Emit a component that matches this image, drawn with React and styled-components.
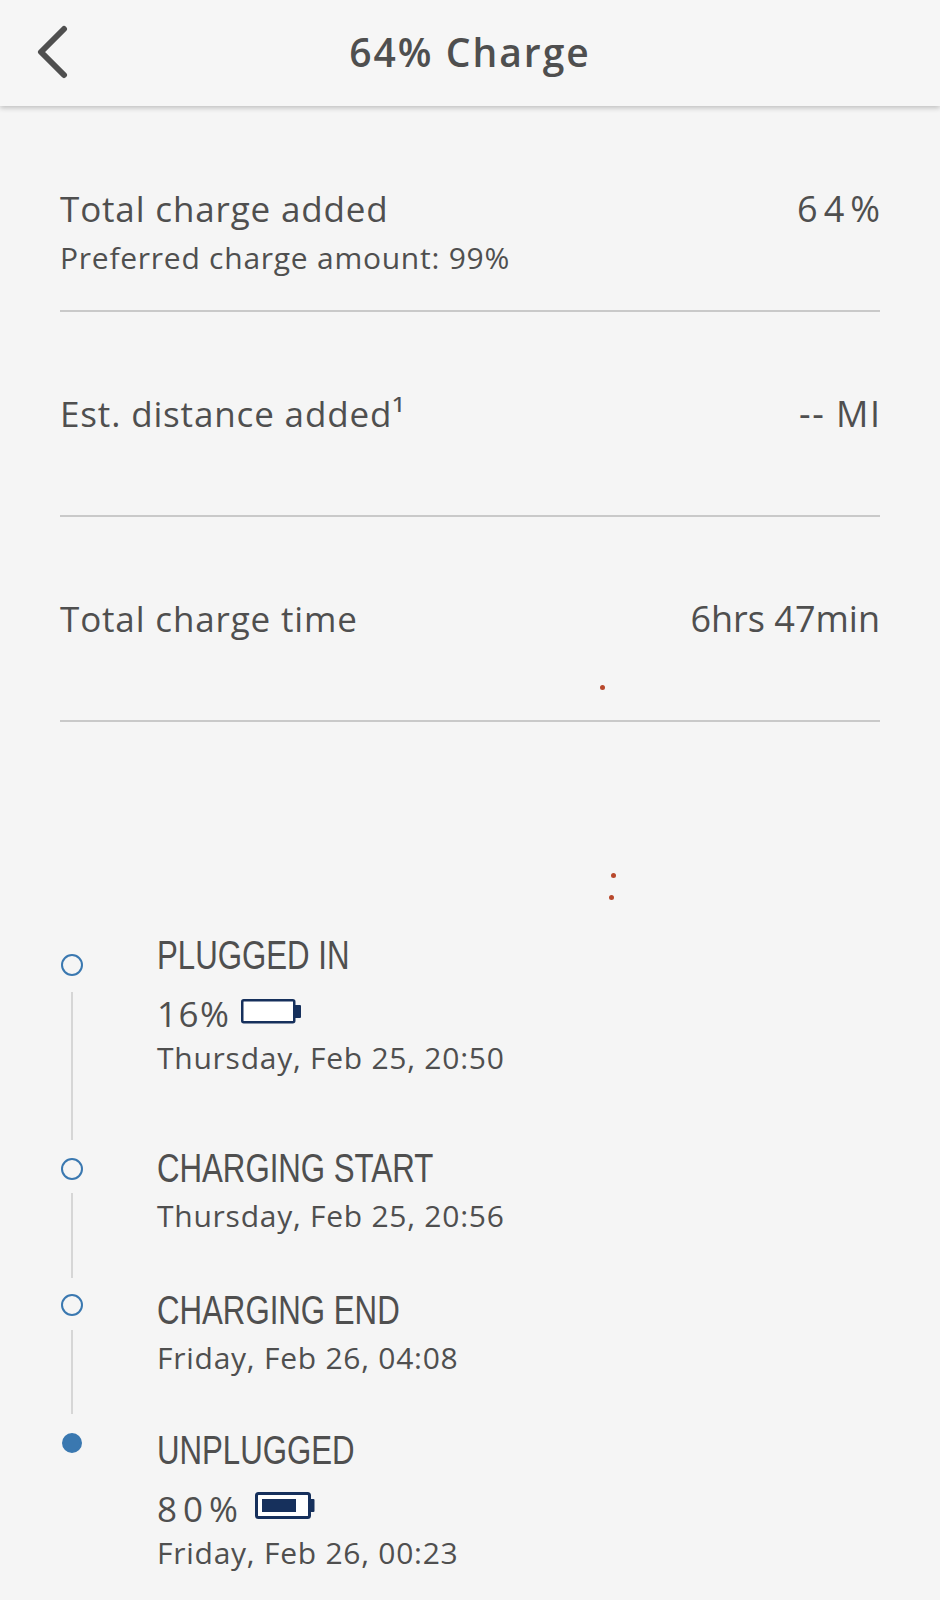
import styled, { createGlobalStyle } from "styled-components";

const ink = "#4f4f4f";
const navy = "#16305c";
const blue = "#3a78b0";

const GlobalStyle = createGlobalStyle`
  html, body {
    margin: 0;
    background: #f5f5f5;
  }
  * {
    box-sizing: border-box;
  }
`;

const summary = [
  { label: "Total charge added", note: "Preferred charge amount: 99%", value: "64%", spacing: 6 },
  { label: "Est. distance added¹", value: "-- MI", spacing: 1.5 },
  { label: "Total charge time", value: "6hrs 47min", spacing: 0 },
];

const steps = [
  {
    title: "PLUGGED IN",
    percent: "16%",
    spacing: 1.5,
    level: 0,
    date: "Thursday, Feb 25, 20:50",
    height: 213,
    dotTop: 19,
    lineTop: 16,
    lineEnd: 8,
  },
  {
    title: "CHARGING START",
    date: "Thursday, Feb 25, 20:56",
    height: 142,
    dotTop: 10,
    lineTop: 13,
    lineEnd: 12,
  },
  {
    title: "CHARGING END",
    date: "Friday, Feb 26, 04:08",
    height: 140,
    dotTop: 4,
    lineTop: 14,
    lineEnd: 16,
  },
  {
    title: "UNPLUGGED",
    percent: "80%",
    spacing: 6,
    level: 0.8,
    date: "Friday, Feb 26, 00:23",
    height: 170,
    dotTop: 3,
    filled: true,
  },
];

function BackIcon() {
  return (
    <svg width="34" height="54" viewBox="0 0 34 54" fill="none">
      <path d="M28 4 L5 27 L28 50" stroke={ink} strokeWidth="6" strokeLinecap="round" strokeLinejoin="round" />
    </svg>
  );
}

function Battery({ level }) {
  if (level > 0) {
    return (
      <svg width="60" height="28" viewBox="0 0 60 28">
        <rect x="1.5" y="1.5" width="53" height="24" rx="2" fill="#fff" stroke={navy} strokeWidth="3" />
        <rect x="7" y="7" width="34" height="13" fill={navy} />
        <rect x="55" y="7" width="4.5" height="13" rx="1" fill={navy} />
      </svg>
    );
  }
  return (
    <svg width="60" height="25" viewBox="0 0 60 25">
      <rect x="1.25" y="1.25" width="52" height="22" rx="1.5" fill="#fff" stroke={navy} strokeWidth="2.5" />
      <rect x="53" y="6" width="7" height="13" rx="1" fill={navy} />
    </svg>
  );
}

export default function App() {
  return (
    <Page>
      <GlobalStyle />
      <Header>
        <BackButton type="button">
          <BackIcon />
        </BackButton>
        <Title>64% Charge</Title>
      </Header>

      <Summary>
        {summary.map((row) => (
          <SummaryRow key={row.label}>
            <div>
              <Label>{row.label}</Label>
              {row.note && <Note>{row.note}</Note>}
            </div>
            <Value $spacing={row.spacing}>{row.value}</Value>
          </SummaryRow>
        ))}
      </Summary>

      <Timeline>
        {steps.map((step) => (
          <Step key={step.title} $height={step.height}>
            <Marker $top={step.dotTop}>
              <Dot $filled={step.filled} />
              {step.lineEnd && <Connector $top={step.lineTop} $end={step.lineEnd} />}
            </Marker>
            <div>
              <StepTitle>{step.title}</StepTitle>
              {step.percent && (
                <Level>
                  <Percent $spacing={step.spacing}>{step.percent}</Percent>
                  <BatterySlot>
                    <Battery level={step.level} />
                  </BatterySlot>
                </Level>
              )}
              <StepDate $tight={Boolean(step.percent)}>{step.date}</StepDate>
            </div>
          </Step>
        ))}
      </Timeline>

      <Speck $x={600} $y={685} />
      <Speck $x={611} $y={873} />
      <Speck $x={609} $y={895} />
    </Page>
  );
}

const Page = styled.main`
  position: relative;
  width: 940px;
  height: 1600px;
  overflow: hidden;
  background: #f5f5f5;
  color: ${ink};
  font-family: "Open Sans", "Noto Sans", sans-serif;
`;

const Header = styled.header`
  position: relative;
  display: flex;
  align-items: center;
  justify-content: center;
  height: 106px;
  padding-bottom: 4px;
  background: #f6f6f6;
  box-shadow: 0 2px 5px rgba(0, 0, 0, 0.22);
`;

const BackButton = styled.button`
  position: absolute;
  left: 36px;
  top: 25px;
  display: flex;
  padding: 0;
  border: 0;
  background: none;
`;

const Title = styled.h1`
  margin: 0;
  font-size: 39px;
  font-weight: 600;
  letter-spacing: 2px;
  color: ${ink};
`;

const Summary = styled.section`
  padding: 1px 60px 0;
`;

const SummaryRow = styled.div`
  display: flex;
  align-items: flex-start;
  justify-content: space-between;
  height: 205px;
  padding-top: 80px;
  border-bottom: 2px solid #c9c9c9;
`;

const Label = styled.div`
  font-size: 35px;
  line-height: 44px;
  letter-spacing: 0.85px;
`;

const Value = styled.div`
  margin-right: ${(p) => -p.$spacing}px;
  font-size: 36px;
  line-height: 44px;
  letter-spacing: ${(p) => p.$spacing}px;
`;

const Note = styled.div`
  margin-top: 9px;
  font-size: 30px;
  line-height: 36px;
  letter-spacing: 0.75px;
`;

const Timeline = styled.section`
  margin-top: 213px;
`;

const Step = styled.article`
  display: grid;
  grid-template-columns: 157px 1fr;
  height: ${(p) => p.$height}px;
`;

const Marker = styled.div`
  display: flex;
  flex-direction: column;
  align-items: center;
  width: 22px;
  margin-left: 61px;
  padding-top: ${(p) => p.$top}px;
`;

const Dot = styled.span`
  flex: none;
  width: ${(p) => (p.$filled ? 20 : 22)}px;
  height: ${(p) => (p.$filled ? 20 : 22)}px;
  border-radius: 50%;
  border: 2px solid ${blue};
  background: ${(p) => (p.$filled ? blue : "transparent")};
`;

const Connector = styled.span`
  flex: 1;
  width: 2px;
  margin: ${(p) => p.$top}px 0 ${(p) => p.$end}px;
  background: #d6d6d6;
`;

const StepTitle = styled.h2`
  margin: 0;
  font-family: "Liberation Sans", sans-serif;
  font-size: 40px;
  line-height: 40px;
  font-weight: 400;
  color: ${ink};
  transform: scaleX(0.78);
  transform-origin: left center;
  white-space: nowrap;
`;

const Level = styled.div`
  display: flex;
  align-items: center;
  gap: 11px;
  margin-top: 17px;
`;

const Percent = styled.span`
  font-size: 35px;
  line-height: 44px;
  letter-spacing: ${(p) => p.$spacing}px;
`;

const BatterySlot = styled.span`
  display: flex;
  margin-bottom: 6px;
`;

const StepDate = styled.div`
  margin-top: ${(p) => (p.$tight ? 2 : 8)}px;
  font-size: 30px;
  line-height: 40px;
  letter-spacing: 0.75px;
`;

const Speck = styled.span`
  position: absolute;
  left: ${(p) => p.$x}px;
  top: ${(p) => p.$y}px;
  width: 5px;
  height: 5px;
  border-radius: 50%;
  background: #b8482c;
`;
